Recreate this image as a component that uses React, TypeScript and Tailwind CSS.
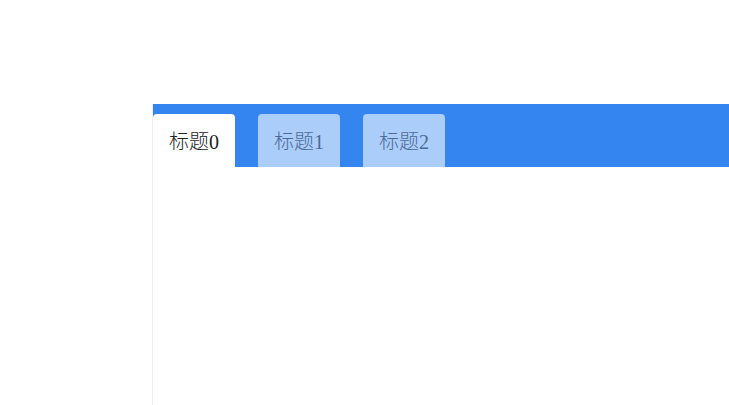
import React, { useState } from 'react';

const tabs = ['标题0', '标题1', '标题2'];

export default function App() {
  const [active, setActive] = useState(0);

  return (
    <div
      className="h-[405px] w-[729px] overflow-hidden bg-white"
      style={{ fontFamily: '"Liberation Serif", "Noto Sans CJK SC", serif' }}
    >
      <div className="ml-[152px] mt-[104px] flex h-[301px] flex-col border-l border-[#eeeeee]">
        {/* Tab bar */}
        <div className="flex h-[63px] items-end gap-[23px] bg-[#3485f0]">
          {tabs.map((t, i) => (
            <button
              key={t}
              onClick={() => setActive(i)}
              className={`flex h-[53px] w-[82px] items-center justify-center rounded-t-[4px] pt-[2px] text-[20px] font-light ${
                active === i ? 'bg-white text-[#222222]' : 'bg-[#abcdfa] text-[#4b6a97]'
              }`}
            >
              {t}
            </button>
          ))}
        </div>
        <div className="flex-1" />
      </div>
    </div>
  );
}
